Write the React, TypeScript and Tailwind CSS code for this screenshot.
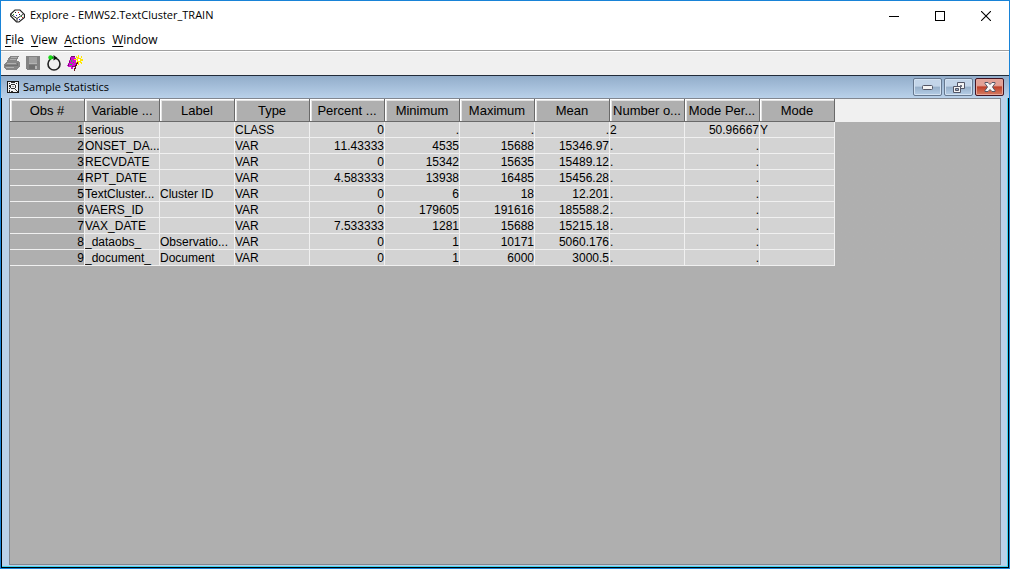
import React from 'react';

type Row = string[];

const columns = ['Obs #', 'Variable ...', 'Label', 'Type', 'Percent ...', 'Minimum', 'Maximum', 'Mean', 'Number o...', 'Mode Per...', 'Mode'];
const rightAligned = [true, false, false, false, true, true, true, true, false, true, false];

const rows: Row[] = [
  ['1', 'serious', '', 'CLASS', '0', '.', '.', '.', '2', '50.96667', 'Y'],
  ['2', 'ONSET_DA...', '', 'VAR', '11.43333', '4535', '15688', '15346.97', '.', '.', ''],
  ['3', 'RECVDATE', '', 'VAR', '0', '15342', '15635', '15489.12', '.', '.', ''],
  ['4', 'RPT_DATE', '', 'VAR', '4.583333', '13938', '16485', '15456.28', '.', '.', ''],
  ['5', 'TextCluster...', 'Cluster ID', 'VAR', '0', '6', '18', '12.201', '.', '.', ''],
  ['6', 'VAERS_ID', '', 'VAR', '0', '179605', '191616', '185588.2', '.', '.', ''],
  ['7', 'VAX_DATE', '', 'VAR', '7.533333', '1281', '15688', '15215.18', '.', '.', ''],
  ['8', '_dataobs_', 'Observatio...', 'VAR', '0', '1', '10171', '5060.176', '.', '.', ''],
  ['9', '_document_', 'Document', 'VAR', '0', '1', '6000', '3000.5', '.', '.', ''],
];

function DiceIcon() {
  return (
    <svg width="15" height="14" viewBox="0 0 15 14" aria-hidden="true">
      <path d="M5 1l5 0 4.500 4.500v3L9 13H6.500L.7 7V5z" fill="#fff" stroke="#222" strokeWidth="1.2" />
      <path d="M1 5.500l6 4 6.500-4.500M7 9.500V13" fill="none" stroke="#333" strokeWidth="1" />
      <path d="M5 3h1v1H5zM9 5h1v1H9zM4 10h1v1H4z" fill="#222" />
      <path d="M8 3h1v1H8zM12 8h1v1h-1z" fill="#d22" />
      <path d="M9 10h1v1H9zM6 6h1v1H6z" fill="#22c" />
      <path d="M3 5h1v1H3zM11 7h1v1h-1z" fill="#292" />
    </svg>
  );
}

function PrintIcon() {
  return (
    <svg width="16" height="16" viewBox="0 0 16 16" shapeRendering="crispEdges" aria-hidden="true">
      <path d="M6 1h9v1h-1v2h-1v2h2v1h1v5h-1v1h-1v1h-1v1H2v-1H1v-1H0V9h1V8h1V7h1V5h1V3h1V2h1z" fill="#868686" />
      <path d="M7 2h6v1H7zM6 4h6v1H6zM3 8h9v1H3zM2 12h8v1H2z" fill="#b0b0b0" />
      <path d="M1 10h12v1H1zM13 8h1v3h-1z" fill="#707070" />
    </svg>
  );
}

function SaveIcon() {
  return (
    <svg width="14" height="14" viewBox="0 0 14 14" shapeRendering="crispEdges" aria-hidden="true">
      <path d="M0 0h14v14H1v-1H0z" fill="#828282" />
      <path d="M3 1h8v6H3z" fill="#a0a0a0" />
      <path d="M3 7h8v1H3zM9 10h2v3H9z" fill="#b4b4b4" />
      <path d="M3 9h6v4H3z" fill="#707070" />
    </svg>
  );
}

function RefreshIcon() {
  return (
    <svg width="16" height="16" viewBox="0 0 16 16" aria-hidden="true">
      <circle cx="8" cy="9" r="6" fill="none" stroke="#222" strokeWidth="1.6" />
      <path d="M5 1h4v4H5z" fill="#f0f0f0" />
      <path d="M7.500 0l4 3-4 2.500z" fill="#111" />
      <circle cx="4.500" cy="2.500" r="2.200" fill="#18d818" />
      <path d="M6 1l2.500 2L6 4z" fill="#0b980b" />
    </svg>
  );
}

function WizardIcon() {
  return (
    <svg width="16" height="17" viewBox="0 0 16 17" shapeRendering="crispEdges" aria-hidden="true">
      <path d="M4 1h4v2h1v5h1v3H8v1H6v2H4v-2H1v-1H0v-1h1V8h1V5h1V2h1z" fill="#d010d0" />
      <path d="M4 1h4v1H4zM3 3h1v2H3zM2 6h1v2H2zM1 9h1v2H1zM5 11h3v1H5z" fill="#71106f" />
      <path d="M4 5h1v2H4zM3 9h2v1H3zM6 7h1v1H6z" fill="#21cc32" />
      <path d="M11 0h1v3h2V1h1v2h-1v1h2v2h-2v1h1v2h-1V8h-1V7h-1v3h-1V7h-1v1H9V7h1V5H7V4h3V3H9V1h1v1h1z" fill="#ffe600" />
      <path d="M11 4h2v2h-2z" fill="#fff" />
      <path d="M10 7h1v2h-1v2H9v3H8v2H7v-3h1v-3h1V8h1z" fill="#641520" />
    </svg>
  );
}

function ProbeIcon() {
  return (
    <svg width="12" height="12" viewBox="0 0 12 12" shapeRendering="crispEdges" aria-hidden="true">
      <path d="M0 0h12v12H0z" fill="#161616" />
      <path d="M1 1h10v10H1z" fill="#f4f4f4" />
      <path d="M2 2h1v1H2zM2 4h1v2H2zM2 7h1v1H2zM2 9h1v2H2zM4 1h4v1H4zM9 2h1v1H9zM4 10h2v1H4z" fill="#333" />
      <path d="M4 3h4v1h1v3H8v1h1v1h1v1h1v1h-1v-1H9V9H8V8H4V7H3V4h1zM4 4v3h4V4z" fillRule="evenodd" fill="#333" />
      <path d="M5 5h2v1H5z" fill="#aaa" />
    </svg>
  );
}

const menus = [
  ['F', 'ile'],
  ['V', 'iew'],
  ['A', 'ctions'],
  ['W', 'indow'],
];

const frameButton = 'flex h-[18px] w-[29px] items-center justify-center rounded-[2px] border border-[#66788f] bg-linear-to-b from-[#c3d5e9] from-45% via-[#96afc9] via-50% to-[#b6cee7] shadow-[inset_0_0_0_1px_#d2e1f1]';

export default function App() {
  return (
    <div className="flex min-h-screen flex-col border border-[#1883d7] bg-white font-['Open_Sans','Noto_Sans',sans-serif] text-[11px] text-black">
      <header className="flex h-[29px] items-center pl-[9px]">
        <DiceIcon />
        <h1 className="ml-[5px] flex-1 whitespace-nowrap">Explore - EMWS2.TextCluster_TRAIN</h1>
        <div className="flex h-full">
          <button aria-label="Minimize" className="flex w-[46px] items-center justify-center">
            <svg width="10" height="10" shapeRendering="crispEdges" aria-hidden="true"><path d="M0 5h10v1H0z" /></svg>
          </button>
          <button aria-label="Maximize" className="flex w-[46px] items-center justify-center">
            <svg width="10" height="10" shapeRendering="crispEdges" aria-hidden="true"><path d="M.5.5h9v9h-9z" fill="none" stroke="#000" /></svg>
          </button>
          <button aria-label="Close" className="flex w-[46px] items-center justify-center">
            <svg width="10" height="10" aria-hidden="true"><path d="M0 0l10 10M10 0L0 10" stroke="#000" strokeWidth="1.1" /></svg>
          </button>
        </div>
      </header>
      <nav aria-label="Main menu" className="flex h-[20px] items-center gap-[7px] pl-1 text-[12px]">
        {menus.map(([key, rest]) => (
          <button key={key} className="whitespace-nowrap leading-[20px]"><span className="underline underline-offset-2">{key}</span>{rest}</button>
        ))}
      </nav>
      <div role="toolbar" aria-label="Tools" className="flex h-[25px] items-center gap-[5px] border-t border-[#a0a0a0] bg-[#f0f0f0] pl-[3px] shadow-[inset_0_1px_0_#fff]">
        <button aria-label="Print" disabled className="flex w-4 justify-center"><PrintIcon /></button>
        <button aria-label="Save" disabled className="flex w-4 justify-center"><SaveIcon /></button>
        <button aria-label="Refresh" className="flex w-4 justify-center"><RefreshIcon /></button>
        <button aria-label="Wizard" className="flex w-4 justify-center"><WizardIcon /></button>
      </div>
      <main className="flex flex-1 flex-col border-t border-[#222c3a] bg-[#b9d1ea]">
        <div className="flex h-[22px] items-center bg-linear-to-b from-[#92adca] to-[#b9d1ea] pr-[5px] pl-[6px]">
          <ProbeIcon />
          <h2 className="ml-1 flex-1 whitespace-nowrap">Sample Statistics</h2>
          <div className="flex gap-[2px]">
            <button aria-label="Minimize panel" className={frameButton}>
              <svg width="11" height="5" aria-hidden="true"><rect x=".5" y=".5" width="10" height="4" rx="1" fill="#f4f4f4" stroke="#535666" /></svg>
            </button>
            <button aria-label="Restore panel" className={frameButton}>
              <svg width="12" height="11" aria-hidden="true"><path d="M4.500 .5h7v6h-7z" fill="#f4f4f4" stroke="#535666" /><path d="M7.500 3.500h1v1h-1z" fill="#93aac5" stroke="#535666" /><path d="M.5 4.500h7v6h-7z" fill="#f4f4f4" stroke="#535666" /><path d="M2.500 6.500h3v2h-3z" fill="#93aac5" stroke="#535666" /></svg>
            </button>
            <button aria-label="Close panel" className="flex h-[18px] w-[29px] items-center justify-center rounded-[2px] border border-[#431422] bg-linear-to-b from-[#e2a196] from-40% via-[#bf3f28] via-50% to-[#d47c63] shadow-[inset_0_0_0_1px_#e5a69a]">
              <svg width="12" height="10" viewBox="0 0 12 10" aria-hidden="true"><path d="M1 .5h3l2 2 2-2h3v1L8.500 5 11 8.500v1H8l-2-2-2 2H1v-1L3.500 5 1 1.500z" fill="#f6f6f6" stroke="#535666" /></svg>
            </button>
          </div>
        </div>
        <div className="flex flex-1 border-x border-b border-black">
          <div className="flex flex-1 border-r border-b border-[#3fd4f0] pr-[6px] pb-px pl-[7px]">
            <section className="flex-1 border border-[#828790] bg-[#afafaf] font-['Liberation_Sans',Arial,sans-serif]">
              <div className="bg-linear-to-b from-[#f0f0f0] from-[23px] to-[#afafaf] to-[23px]">
                <table className="w-[825px] table-fixed border-separate border-spacing-0 text-[12px]">
                  <thead>
                    <tr className="h-[23px]">
                      {columns.map((c) => (
                        <th key={c} scope="col" className="overflow-hidden whitespace-nowrap border-r border-b border-[#696969] bg-[#afafaf] p-0 pt-[2px] text-[13px] leading-[20px] font-normal shadow-[inset_1px_1px_0_#fff,inset_2px_2px_0_#e3e3e3]">{c}</th>
                      ))}
                    </tr>
                  </thead>
                  <tbody>
                    {rows.map((row) => (
                      <tr key={row[0]} className="h-4">
                        {row.map((cell, i) => (
                          <td key={columns[i]} className={`${i === 0 ? 'bg-[#afafaf]' : 'bg-[#d3d3d3]'} ${rightAligned[i] ? 'text-right [font-kerning:none]' : 'text-left'} overflow-hidden whitespace-nowrap border-r border-b border-[#f0f0f0] p-0 pt-px leading-[14px]`}>{cell}</td>
                        ))}
                      </tr>
                    ))}
                  </tbody>
                </table>
              </div>
            </section>
          </div>
        </div>
      </main>
    </div>
  );
}
